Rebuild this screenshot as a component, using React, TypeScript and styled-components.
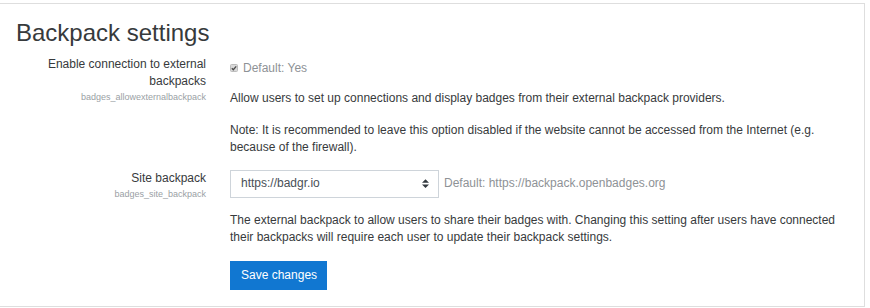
import React from 'react';
import styled, { createGlobalStyle } from 'styled-components';

const GlobalStyle = createGlobalStyle`
  body {
    margin: 0;
    font-family: "Liberation Sans", Arial, sans-serif;
    font-size: 12px;
    line-height: 17px;
    color: #373a3c;
    background: #fff;
  }
`;

const SettingsPanel = styled.div`
  margin: 3px 5px 0 -1px;
  border: 1px solid #dedede;
  padding: 15px 16px 16px 16px;
`;

const Heading = styled.h2`
  margin: 0 0 8px 0;
  font-size: 24px;
  font-weight: 400;
  line-height: 28.8px;
  color: #373a3c;
`;

const SettingRow = styled.div<{ $gap?: number }>`
  display: grid;
  grid-template-columns: 190px 605px;
  column-gap: 24px;
  margin-bottom: ${p => p.$gap ?? 0}px;
`;

const LabelCol = styled.div`
  text-align: right;
`;

const LabelText = styled.div`
  color: #373a3c;
`;

const ShortName = styled.div`
  margin-top: 1px;
  font-size: 9px;
  line-height: 12px;
  color: #9a9fa5;
`;

const ContentCol = styled.div<{ $offset?: number }>`
  padding-top: ${p => p.$offset ?? 0}px;
`;

const DefaultLine = styled.div`
  display: flex;
  align-items: center;
  gap: 5px;
  color: #8e9296;
`;

const Paragraph = styled.p<{ $top: number }>`
  margin: ${p => p.$top}px 0 0 0;
`;

const SelectRow = styled.div`
  display: flex;
  align-items: center;
  gap: 5px;
`;

const SelectBox = styled.div`
  width: 209px;
  height: 28px;
  box-sizing: border-box;
  border: 1px solid #ced4da;
  border-radius: 0;
  padding: 0 9px 0 10px;
  display: flex;
  align-items: center;
  justify-content: space-between;
  color: #495057;
`;

const DefaultHint = styled.span`
  color: #8e9296;
`;

const SaveButton = styled.button`
  margin-top: 15px;
  display: block;
  background: #1177d1;
  color: #fff;
  border: 0;
  border-radius: 0;
  padding: 6px 10px 6px 11px;
  font-family: inherit;
  font-size: 12px;
  line-height: 17px;
`;

const CheckIcon = () => (
  <svg width="8" height="8" viewBox="0 0 8 8">
    <rect x="0.5" y="0.5" width="7" height="7" rx="1" fill="#d9d9d9" stroke="#bdbdbd" />
    <path d="M1.8 4.2 L3.3 5.7 L6.2 2.3" fill="none" stroke="#4a4a4a" strokeWidth="1.3" />
  </svg>
);

const SortArrows = () => (
  <svg width="7" height="9" viewBox="0 0 4 5">
    <path d="M2 0L0 2h4zm0 5L0 3h4z" fill="#343a40" />
  </svg>
);

const App: React.FC = () => {
  return (
    <>
      <GlobalStyle />
      <SettingsPanel>
        <Heading>Backpack settings</Heading>

        <SettingRow $gap={13.5}>
          <LabelCol>
            <LabelText>Enable connection to external backpacks</LabelText>
            <ShortName>badges_allowexternalbackpack</ShortName>
          </LabelCol>
          <ContentCol $offset={4}>
            <DefaultLine>
              <CheckIcon />
              <span>Default: Yes</span>
            </DefaultLine>
            <Paragraph $top={13.5}>
              Allow users to set up connections and display badges from their external backpack providers.
            </Paragraph>
            <Paragraph $top={15}>
              Note: It is recommended to leave this option disabled if the website cannot be accessed from the Internet (e.g. because of the firewall).
            </Paragraph>
          </ContentCol>
        </SettingRow>

        <SettingRow>
          <LabelCol>
            <LabelText>Site backpack</LabelText>
            <ShortName>badges_site_backpack</ShortName>
          </LabelCol>
          <ContentCol>
            <SelectRow>
              <SelectBox>
                <span>https://badgr.io</span>
                <SortArrows />
              </SelectBox>
              <DefaultHint>Default: https://backpack.openbadges.org</DefaultHint>
            </SelectRow>
            <Paragraph $top={14}>
              The external backpack to allow users to share their badges with. Changing this setting after users have connected their backpacks will require each user to update their backpack settings.
            </Paragraph>
            <SaveButton>Save changes</SaveButton>
          </ContentCol>
        </SettingRow>
      </SettingsPanel>
    </>
  );
};

export default App;
